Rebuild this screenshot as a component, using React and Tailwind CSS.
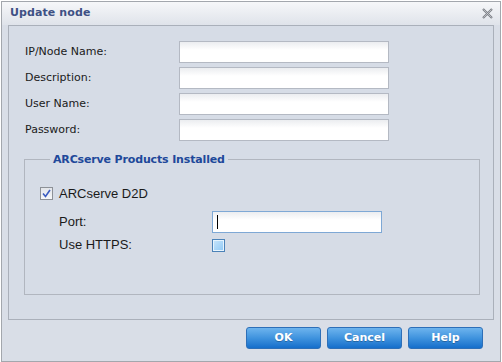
import React from "react";

const font = { fontFamily: '"DejaVu Sans", Verdana, sans-serif' };
const arial = { fontFamily: '"Liberation Sans", Arial, sans-serif' };

function TextBox() {
  return (
    <div className="h-[22px] w-[210px] border border-[#b4b9c3] bg-linear-to-b from-[#ebedf0] to-white to-[40%]" />
  );
}

function Row({ label }) {
  return (
    <div className="flex h-[22px] items-center">
      <span className="w-[154px] text-[11px] text-[#1a1a1a]">{label}</span>
      <TextBox />
    </div>
  );
}

function Button({ children }) {
  return (
    <button className="h-[22px] w-[75px] rounded-[3px] border border-[#2d6fb8] bg-linear-to-b from-[#6db4ee] via-[#3f93de] via-50% to-[#146ecb] text-[11px] font-bold text-white [text-shadow:0_1px_0_rgba(0,0,0,0.25)]">
      {children}
    </button>
  );
}

export default function App() {
  return (
    <div className="h-[362px] w-[502px] bg-white pl-[1px] pt-[1px]" style={font}>
      <div className="flex h-[361px] w-[500px] flex-col border border-[#a3a7ad] bg-[#d9dee7]">
        {/* title bar */}
        <div className="flex h-[23px] items-center justify-between bg-linear-to-b from-[#f6f7f9] to-[#dfe3ea] pl-[8px] pr-[6px]">
          <span className="text-[11px] font-bold tracking-[0.1px] text-[#3e5184]">Update node</span>
          <svg width="11" height="11" viewBox="0 0 11 11" className="mr-[1px]">
            <path d="M1 1L10 10M10 1L1 10" stroke="#7b7f86" strokeWidth="2.2" />
            <path d="M1.5 1.5L9.5 9.5M9.5 1.5L1.5 9.5" stroke="#d4d6da" strokeWidth="0.7" />
          </svg>
        </div>

        {/* body */}
        <div className="mx-[6px] flex h-[295px] flex-col border border-[#aab0ba] bg-[#d6dce6] px-[15px] pt-[15px]">
          <div className="ml-[1px] flex flex-col gap-[4px]">
            <Row label="IP/Node Name:" />
            <Row label="Description:" />
            <Row label="User Name:" />
            <Row label="Password:" />
          </div>

          <fieldset className="mt-[11px] h-[143px] w-[456px] border border-[#b1b6bf] px-[15px]">
            <legend className="ml-[10px] px-[3px] text-[11px] leading-[15px] font-bold tracking-[-0.15px] text-[#20489a]">
              ARCserve Products Installed
            </legend>
            <div className="mt-[17px] flex items-center" style={arial}>
              <div className="flex h-[13px] w-[13px] items-center justify-center border border-[#8d9197] bg-linear-to-b from-[#e3e6ea] to-[#f6f7f9]">
                <svg width="9" height="9" viewBox="0 0 9 9">
                  <path d="M1 4.5L3.5 7.5L8 1" fill="none" stroke="#3b5cc0" strokeWidth="1.6" />
                </svg>
              </div>
              <span className="ml-[6px] text-[13px] text-[#1a1a1a]">ARCserve D2D</span>
            </div>
            <div className="mt-[7px] ml-[19px] flex flex-col gap-[6px]" style={arial}>
              <div className="flex h-[22px] items-center">
                <span className="w-[153px] text-[13px] text-[#1a1a1a]">Port:</span>
                <div className="flex h-[22px] w-[170px] items-center border border-[#7ea8d5] bg-linear-to-b from-[#ebedf0] to-white to-[40%] pl-[4px]">
                  <div className="h-[14px] w-[1px] bg-black" />
                </div>
              </div>
              <div className="flex h-[13px] items-center">
                <span className="w-[153px] text-[13px] text-[#1a1a1a]">Use HTTPS:</span>
                <div className="h-[13px] w-[13px] border border-[#4b82b8] bg-linear-to-br from-[#c9e6fb] to-[#8ec8f5] shadow-[inset_0_0_0_1px_#e6f4fe]" />
              </div>
            </div>
          </fieldset>
        </div>

        {/* footer */}
        <div className="mt-[7px] flex justify-end gap-[6px] pr-[17px]">
          <Button>OK</Button>
          <Button>Cancel</Button>
          <Button>Help</Button>
        </div>
      </div>
    </div>
  );
}
